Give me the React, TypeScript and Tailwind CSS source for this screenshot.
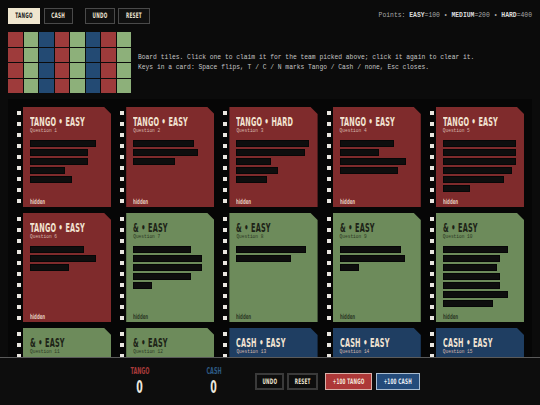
import { FC, ReactNode } from 'react';

type Team = 'tango' | 'cash' | 'none';

const cond = "font-['Liberation_Sans_Narrow','DejaVu_Sans_Condensed',sans-serif] font-bold";
const mono = "font-['Liberation_Mono','DejaVu_Sans_Mono',monospace]";

const cards: { team: Team; diff: string; bars: number[] }[] = [
  { team: 'tango', diff: 'EASY', bars: [66, 58, 58, 35, 42] },
  { team: 'tango', diff: 'EASY', bars: [61, 65, 42] },
  { team: 'tango', diff: 'HARD', bars: [73, 69, 35, 42, 31] },
  { team: 'tango', diff: 'EASY', bars: [54, 39, 66, 58] },
  { team: 'tango', diff: 'EASY', bars: [73, 73, 73, 69, 61, 27] },
  { team: 'tango', diff: 'EASY', bars: [54, 66, 39] },
  { team: 'none', diff: 'EASY', bars: [58, 69, 69, 58, 19] },
  { team: 'none', diff: 'EASY', bars: [70, 55] },
  { team: 'none', diff: 'EASY', bars: [61, 65, 19] },
  { team: 'none', diff: 'EASY', bars: [65, 57, 54, 57, 57, 65, 50] },
  { team: 'none', diff: 'EASY', bars: [62, 70, 44] },
  { team: 'none', diff: 'EASY', bars: [70, 58, 66, 30] },
  { team: 'cash', diff: 'EASY', bars: [66, 54, 40] },
  { team: 'cash', diff: 'EASY', bars: [58, 70, 62, 35] },
  { team: 'cash', diff: 'EASY', bars: [73, 50, 61] },
];

const tileCols = ['bg-[#9e3b3b]', 'bg-[#8db07a]', 'bg-[#234a73]', 'bg-[#9e3b3b]', 'bg-[#8db07a]', 'bg-[#234a73]', 'bg-[#9e3b3b]', 'bg-[#8db07a]'];

const cardBg: Record<Team, string> = {
  tango: 'bg-[#7f2b2c]',
  cash: 'bg-[#1f3e62]',
  none: 'bg-[#6d8b5b]',
};

const label: Record<Team, string> = { tango: 'TANGO', cash: 'CASH', none: '&' };

// squeezed display text, the poster font isn't installed
const Sq: FC<{ children: ReactNode; className?: string; center?: boolean }> = ({ children, className = '', center }) => (
  <span className={`inline-block whitespace-nowrap ${center ? 'origin-center' : 'origin-left'} ${cond} ${className}`}>
    {children}
  </span>
);

const Card: FC<{ n: number; team: Team; diff: string; bars: number[] }> = ({ n, team, diff, bars }) => {
  const dark = team === 'none';
  return (
    <div
      className={`flex-1 min-w-0 flex flex-col px-[7px] pt-[6px] pb-[5px] [clip-path:polygon(0_0,calc(100%-7px)_0,100%_7px,100%_100%,0_100%)] ${cardBg[team]}`}
    >
      <div className="h-[14px] leading-[14px] w-0">
        <Sq className={`text-[12.5px] scale-x-[0.58] tracking-[0.3px] ${dark ? 'text-[#1c2216]' : 'text-[#f2e4d2]'}`}>
          {label[team]} • {diff}
        </Sq>
      </div>
      <div className={`${mono} text-[4.5px] leading-[8px] ${dark ? 'text-[#2c3824]' : 'text-[#d9b9ae]'}`}>
        Question {n}
      </div>
      <div className="flex flex-col gap-[2px] mt-[5px]">
        {bars.map((w, i) => (
          <div key={i} className="h-[7px] bg-[#0e0e0e] border border-[#070707]" style={{ width: w }} />
        ))}
      </div>
      <div className="mt-auto pt-[3px] h-[10px] leading-[7px] w-0">
        <Sq className={`text-[7px] scale-x-[0.62] ${dark ? 'text-[#2e3a26]' : 'text-[#e3c9bd]'}`}>hidden</Sq>
      </div>
    </div>
  );
};

const HeadBtn: FC<{ children: string; on?: boolean; w: string }> = ({ children, on, w }) => (
  <button
    className={`h-4 ${w} border flex items-center justify-center ${
      on ? 'bg-[#efe6cf] text-[#1a1a1a] border-[#efe6cf]' : 'bg-[#101010] text-[#ece3d0] border-[#4a4a4a]'
    }`}
  >
    <Sq center className="text-[7.5px] scale-x-[0.62] tracking-[0.4px]">
      {children}
    </Sq>
  </button>
);

const BarBtn: FC<{ children: string; cls: string }> = ({ children, cls }) => (
  <button className={`h-[17px] flex items-center justify-center ${cls}`}>
    <Sq center className="text-[7.5px] scale-x-[0.62] tracking-[0.3px]">
      {children}
    </Sq>
  </button>
);

export default function App() {
  return (
    <div className="min-h-screen bg-[#0b0b0b] text-[#ddd] p-2 pb-[60px]">
      <div className="flex items-center">
        <div className="flex gap-1">
          <HeadBtn on w="w-[32px]">TANGO</HeadBtn>
          <HeadBtn w="w-[29px]">CASH</HeadBtn>
        </div>
        <div className="flex gap-[3px] ml-3">
          <HeadBtn w="w-[30px]">UNDO</HeadBtn>
          <HeadBtn w="w-[32px]">RESET</HeadBtn>
        </div>
        <div className={`ml-auto ${mono} text-[6.4px] text-[#a9a9a9]`}>
          Points: <b className="text-[#dcdcdc]">EASY</b>=100 • <b className="text-[#dcdcdc]">MEDIUM</b>=200 •{' '}
          <b className="text-[#dcdcdc]">HARD</b>=400
        </div>
      </div>

      <div className="flex items-center gap-[7px] mt-2">
        <div className="grid grid-cols-[repeat(8,14.5px)] gap-px">
          {Array.from({ length: 32 }).map((_, i) => (
            <div key={i} className={`h-[14.5px] ${tileCols[i % 8]}`} />
          ))}
        </div>
        <div className={`${mono} text-[6.3px] leading-[10px] text-[#c4c4c4]`}>
          <div>Board tiles. Click one to claim it for the team picked above; click it again to clear it.</div>
          <div>Keys in a card: Space flips, T / C / N marks Tango / Cash / none, Esc closes.</div>
        </div>
      </div>

      <div className="mt-[6px] bg-[#060606] pl-[9px] pr-[8px] pt-[8px]">
        <div className="grid grid-cols-5 gap-x-[9px]">
          {cards.map((c, i) => (
            <div key={i} className="flex pb-[6px] min-w-0">
              <div className="w-[4px] mr-[2px] shrink-0 bg-[linear-gradient(#e9e6e0_0_4px,transparent_4px)] bg-[length:4px_11px] bg-[position:0_4px] bg-repeat-y" />
              <Card n={i + 1} {...c} />
            </div>
          ))}
        </div>
      </div>

      <div className="fixed bottom-0 left-0 right-0 h-[48px] bg-[#0d0d0d] border-t border-[#5a5a5a] flex items-center justify-center">
        <div className="flex items-center">
          <div className="w-[40px] flex flex-col items-center">
            <Sq center className="text-[8px] leading-[10px] scale-x-[0.68] text-[#a83a3a]">TANGO</Sq>
            <Sq center className="text-[18px] leading-[20px] scale-x-[0.58] text-[#ece8df]">0</Sq>
          </div>
          <div className="w-[40px] flex flex-col items-center ml-[34px]">
            <Sq center className="text-[8px] leading-[10px] scale-x-[0.68] text-[#2d5b86]">CASH</Sq>
            <Sq center className="text-[18px] leading-[20px] scale-x-[0.58] text-[#ece8df]">0</Sq>
          </div>
          <div className="flex gap-[3px] ml-[21px]">
            <BarBtn cls="w-[29px] border-2 border-[#3a3a3a] bg-[#0d0d0d] text-[#ece3d0]">UNDO</BarBtn>
            <BarBtn cls="w-[31px] border-2 border-[#3a3a3a] bg-[#0d0d0d] text-[#ece3d0]">RESET</BarBtn>
          </div>
          <div className="flex gap-[4px] ml-[7px]">
            <BarBtn cls="w-[47px] border border-[#d9b0a8] bg-[#ad3838] text-[#f3e6dc]">+100 TANGO</BarBtn>
            <BarBtn cls="w-[44px] border border-[#a9bdd2] bg-[#244b7a] text-[#eaf0f6]">+100 CASH</BarBtn>
          </div>
        </div>
      </div>
    </div>
  );
}
